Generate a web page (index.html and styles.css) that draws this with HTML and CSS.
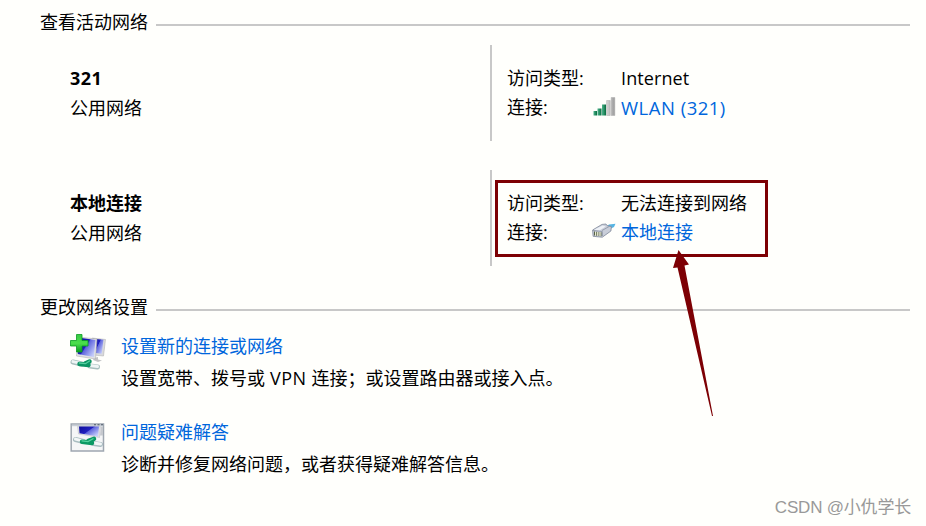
FILE: index.html
```html
<!DOCTYPE html>
<html lang="zh-CN">
<head>
<meta charset="utf-8">
<title>网络和共享中心</title>
<link rel="stylesheet" href="styles.css">
</head>
<body>
<main class="page">
  <section class="active">
    <h2 class="heading">查看活动网络</h2>
    <div class="network">
      <div class="identity"><strong class="latin">321</strong><span>公用网络</span></div>
      <dl class="details">
        <dt>访问类型:</dt><dd class="internet">Internet</dd>
        <dt>连接:</dt>
        <dd>
          <svg class="conn-icon" width="24" height="22" viewBox="0 0 24 22">
            <defs><linearGradient id="bar"><stop stop-color="#4db48c"/><stop offset="1" stop-color="#066b3e"/></linearGradient>
            <linearGradient id="off"><stop stop-color="#d6d6d6"/><stop offset="1" stop-color="#9b9b9b"/></linearGradient></defs>
            <path fill="url(#bar)" d="M1.500 15h3.500v4.500h-3.500z"/><path fill="url(#bar)" d="M5.500 12.500h4v7h-4z"/><path fill="url(#bar)" d="M10 8.500h4v11h-4z"/>
            <path fill="url(#off)" stroke="#aaa" stroke-width=".5" d="M14.600 4.500h3.600v15h-3.600zM19.200 1.500h3.600v18h-3.600z"/>
          </svg>
          <a class="wlan">WLAN (321)</a>
        </dd>
      </dl>
    </div>
    <div class="network">
      <div class="identity"><strong>本地连接</strong><span>公用网络</span></div>
      <dl class="details">
        <dt>访问类型:</dt><dd>无法连接到网络</dd>
        <dt>连接:</dt>
        <dd>
          <svg class="conn-icon" width="24" height="22" viewBox="0 0 24 22">
            <path fill="#56b5e4" d="M14 6l3-2.500 6.500-.8-1.500 3.300-5 2.500z"/>
            <path fill="#c9ced9" stroke="#7e8798" stroke-width=".8" d="M.6 9L10 3.400l4-.4 1 1.600 4.400 1-.5 4.400-8.600 6.200-9.200-.9z"/>
            <path fill="#eef1f6" d="M2 8.700l8.700-4.200 3 1.100-6.200 3.800z"/>
            <path stroke="#818a9b" stroke-width=".7" fill="none" d="M10 9.500l7.500-4.200M10.500 15l-.2-4.500L1 9.500"/>
            <path stroke="#566047" stroke-width="1" fill="none" d="M2.500 10.500v4M4.700 10.800v4M6.900 11v4M9 11.200v4"/>
            <path stroke="#f2f3c8" stroke-width=".9" fill="none" d="M3.600 11v3.500M5.800 11v3.800M8 11v4"/>
          </svg>
          <a>本地连接</a>
        </dd>
      </dl>
      <div class="callout"></div>
      <svg class="arrow" width="46" height="168" viewBox="0 0 46 168"><path fill="#7d0004" d="M5.500 0L0 18l4.500-.5L39 166h1L11.500 15.500l4.500-1z"/></svg>
    </div>
  </section>
  <section class="settings">
    <h2 class="heading">更改网络设置</h2>
    <div class="task">
      <svg class="task-icon" width="38" height="38" viewBox="0 0 38 38">
        <defs>
          <linearGradient id="screen" x1="0" y1="0" x2="1" y2=".7"><stop stop-color="#0c0c9c"/><stop offset=".5" stop-color="#2020bd"/><stop offset=".55" stop-color="#5f65dd"/><stop offset="1" stop-color="#c4ccfa"/></linearGradient>
          <linearGradient id="plus" x1="0" y1="0" x2="0" y2="1"><stop stop-color="#38c944"/><stop offset=".5" stop-color="#4bdf4c"/><stop offset="1" stop-color="#079b20"/></linearGradient>
        </defs>
        <path fill="#d9dadd" stroke="#aaa" stroke-width=".5" d="M22 4l13.500 1.500-2 16.500-10-1z"/>
        <path fill="url(#screen)" d="M23 4.800l10.500 1-1.800 14-8-1z"/>
        <path fill="#c3c4c5" d="M24 24l4-1v2.500l4 1-4 1.500-5-2z"/>
        <path fill="#e1e2e4" stroke="#a5a5a8" stroke-width=".5" d="M8 3l19 2-1.500 20-19-3z"/>
        <path fill="url(#screen)" d="M8 3.500l17.500 2.500-1.700 17-16-3z"/>
        <path fill="url(#plus)" stroke="#0a9c22" stroke-width=".8" d="M6.500.5h5.500v6h6v5.500h-6v6h-5.500v-6h-6v-5.500h6z"/>
        <g fill="none" stroke-linecap="round">
          <path stroke="#a9bfbe" stroke-width="5" d="M3 28l9 2M20 32l7.500 1"/>
          <path stroke="#eff5f5" stroke-width="3" d="M3 27.600l9 2M20 31.600l7.500 1"/>
          <path stroke="#0b9463" stroke-width="4.500" d="M9.500 30l9 1M15 29.500l4.500-2"/>
          <path stroke="#56cf9f" stroke-width="1.300" d="M9.500 29l6 .7 4-2.700"/>
        </g>
      </svg>
      <div class="copy"><a>设置新的连接或网络</a><p>设置宽带、拨号或<span class="vpn"> VPN </span>连接；或设置路由器或接入点。</p></div>
    </div>
    <div class="task">
      <svg class="task-icon trouble" width="36" height="30" viewBox="0 0 36 30">
        <path fill="#f5f6f7" stroke="#9fa7b0" stroke-width="1.500" d="M1.200 1h32.300v27H1.200z"/>
        <path fill="#c7ced6" d="M1.900 1.700h31v1.500h-31z"/>
        <path fill="#4d5967" d="M24 1.200h2v1h-2zM27.500 1.200h2v1h-2zM31 1.200h2v1h-2z"/>
        <path fill="#dedfe3" stroke="#babcc2" stroke-width=".5" d="M7.500 3.500H30.500l-1 11-21-3.500z"/>
        <path fill="url(#screen)" d="M9 3.500H29l-1 10-18.500-3.300z"/>
        <path fill="#c6c9ce" d="M31 3.500h2v9h-3z"/>
        <g fill="none" stroke-linecap="round">
          <path stroke="#a9bcc0" stroke-width="5" d="M5.500 16.500l8 2M23.500 20.500l7 1"/>
          <path stroke="#f3f7f7" stroke-width="3" d="M5.500 16.100l8 2M23.500 20.100l7 1"/>
          <path stroke="#0b9964" stroke-width="4.500" d="M12 18.800l10 1.200M18.500 17.800l5.500-2"/>
          <path stroke="#56d3a0" stroke-width="1.300" d="M12 17.900l6 .7 5-2.800"/>
        </g>
      </svg>
      <div class="copy"><a>问题疑难解答</a><p>诊断并修复网络问题，或者获得疑难解答信息。</p></div>
    </div>
  </section>
  <footer class="watermark">CSDN @小仇学长</footer>
</main>
</body>
</html>
```
FILE: styles.css
```css
* { box-sizing: border-box; }
body {
  margin: 0;
  background: #fffffc;
  color: #000;
  font: 18px/30px "Open Sans", "Noto Sans CJK SC", sans-serif;
}
.page { height: 526px; padding: 7px 16px 0 40px; overflow: hidden; position: relative; }
.active { height: 285px; }
.heading {
  display: flex;
  align-items: center;
  gap: 8px;
  height: 30px;
  margin: 0;
  font-size: 18px;
  font-weight: 400;
}
.heading::after { content: ""; flex: 1; height: 2px; margin-top: 6px; background: #c8c8c8; }
.network {
  position: relative;
  display: grid;
  grid-template-columns: 420px 1fr;
  height: 96px;
  margin: 8px 0 29px 30px;
}
.identity { display: flex; flex-direction: column; padding-top: 18px; }
.identity strong { font-weight: 700; }
.identity .latin { letter-spacing: 0.5px; }
.details {
  display: grid;
  grid-template-columns: 114px 1fr;
  grid-auto-rows: 29px;
  align-content: start;
  margin: 0;
  padding: 19px 0 0 15px;
  border-left: 2px solid #c8c8c8;
  line-height: 29px;
}
dd { position: relative; margin: 0; }
a { color: #0066dc; }
.internet { letter-spacing: 0.1px; }
.wlan { font-size: 18.5px; letter-spacing: 0.5px; }
.conn-icon { position: absolute; left: -29px; top: 3px; }
.callout { position: absolute; left: 425px; top: 10px; width: 273px; height: 77px; border: 3px solid #7d0004; }
.arrow { position: absolute; left: 603px; top: 80px; z-index: 1; }
.task { display: flex; height: 86px; padding-left: 30px; }
.settings .heading { margin-bottom: 10px; }
.task-icon { flex: none; margin: 2px 13px 0 0; }
.trouble { margin: 5px 15px 0 0; }
.copy { line-height: 32px; margin-top: -2px; }
.copy a { display: block; }
.copy p { margin: 0; }
.vpn { letter-spacing: 0.4px; }
.watermark {
  position: absolute;
  right: 15px;
  bottom: 3px;
  color: #999;
  font: 17px/30px "Liberation Sans", "Noto Sans CJK SC", sans-serif;
  letter-spacing: -0.2px;
}
```
